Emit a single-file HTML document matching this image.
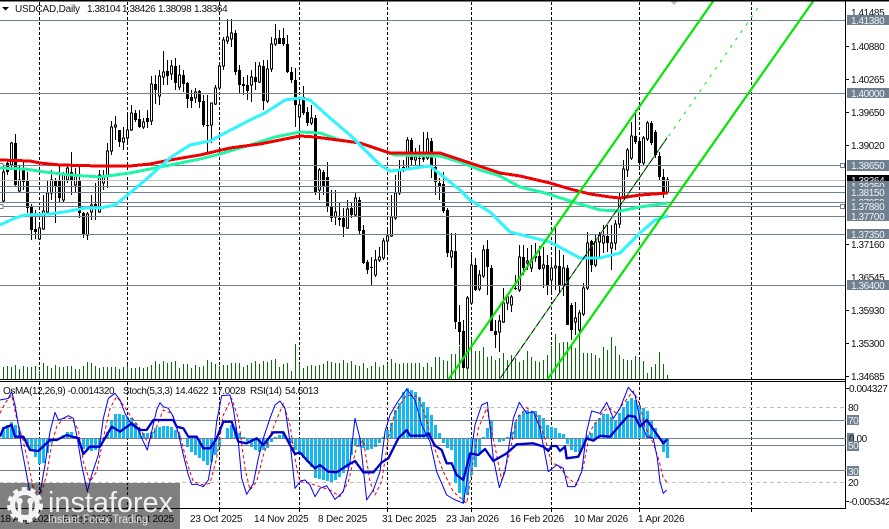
<!DOCTYPE html>
<html>
<head>
<meta charset="utf-8">
<title>USDCAD Daily</title>
<style>
html,body{margin:0;padding:0;background:#fff;width:889px;height:529px;overflow:hidden}
svg{display:block;position:absolute;left:0;top:0}
text{font-family:"Liberation Sans",sans-serif;font-size:10px;fill:#111}
.a{letter-spacing:-.42px}
.w{fill:#eef1f4;letter-spacing:-.42px}
.d{letter-spacing:-.2px}
</style>
</head>
<body>
<svg width="889" height="529" viewBox="0 0 889 529" xmlns="http://www.w3.org/2000/svg">
<rect width="889" height="529" fill="#fff"/>
<!-- vertical grid -->
<g stroke="#000" stroke-width="1" stroke-dasharray="3 2" shape-rendering="crispEdges">
<path d="M39.5 2V379M127.5 2V379M219.5 2V379M299.5 2V379M387.5 2V379M471.5 2V379M551.5 2V379M639.5 2V379M751.5 2V379"/>
<path d="M39.5 382V508M127.5 382V508M219.5 382V508M299.5 382V508M387.5 382V508M471.5 382V508M551.5 382V508M639.5 382V508M751.5 382V508"/>
</g>
<!-- volumes -->
<path stroke="#0b6b0b" stroke-width="1" shape-rendering="crispEdges" fill="none" d="M3.5 367V379M7.5 366V379M11.5 367V379M15.5 365V379M19.5 369V379M23.5 366V379M27.5 367V379M31.5 367V379M35.5 366V379M39.5 371V379M43.5 363V379M47.5 366V379M51.5 368V379M55.5 365V379M59.5 367V379M63.5 367V379M67.5 366V379M71.5 366V379M75.5 369V379M79.5 369V379M83.5 366V379M87.5 362V379M91.5 363V379M95.5 366V379M99.5 368V379M103.5 367V379M107.5 367V379M111.5 367V379M115.5 367V379M119.5 369V379M123.5 367V379M127.5 365V379M131.5 368V379M135.5 368V379M139.5 367V379M143.5 368V379M147.5 367V379M151.5 365V379M155.5 361V379M159.5 364V379M163.5 361V379M167.5 363V379M171.5 362V379M175.5 361V379M179.5 368V379M183.5 364V379M187.5 364V379M191.5 368V379M195.5 365V379M199.5 367V379M203.5 366V379M207.5 360V379M211.5 362V379M215.5 364V379M219.5 366V379M223.5 365V379M227.5 365V379M231.5 363V379M235.5 363V379M239.5 363V379M243.5 367V379M247.5 365V379M251.5 363V379M255.5 361V379M259.5 364V379M263.5 361V379M267.5 362V379M271.5 360V379M275.5 359V379M279.5 367V379M283.5 364V379M287.5 363V379M291.5 371V379M295.5 344V379M299.5 364V379M303.5 368V379M307.5 366V379M311.5 365V379M315.5 366V379M319.5 365V379M323.5 364V379M327.5 361V379M331.5 362V379M335.5 363V379M339.5 363V379M343.5 360V379M347.5 363V379M351.5 361V379M355.5 365V379M359.5 366V379M363.5 363V379M367.5 368V379M371.5 366V379M375.5 362V379M379.5 367V379M383.5 365V379M387.5 364V379M391.5 359V379M395.5 363V379M399.5 364V379M403.5 363V379M407.5 363V379M411.5 363V379M415.5 363V379M419.5 363V379M423.5 367V379M427.5 363V379M431.5 367V379M435.5 357V379M439.5 357V379M443.5 360V379M447.5 361V379M451.5 354V379M455.5 354V379M459.5 346V379M463.5 351V379M467.5 354V379M471.5 338V379M475.5 351V379M479.5 351V379M483.5 347V379M487.5 357V379M491.5 356V379M495.5 360V379M499.5 358V379M503.5 353V379M507.5 360V379M511.5 355V379M515.5 358V379M519.5 362V379M523.5 360V379M527.5 351V379M531.5 357V379M535.5 361V379M539.5 362V379M543.5 360V379M547.5 355V379M551.5 346V379M555.5 334V379M559.5 343V379M563.5 342V379M567.5 342V379M571.5 345V379M575.5 348V379M579.5 333V379M583.5 353V379M587.5 353V379M591.5 353V379M595.5 355V379M599.5 358V379M603.5 347V379M607.5 350V379M611.5 337V379M615.5 346V379M619.5 355V379M623.5 359V379M627.5 360V379M631.5 360V379M635.5 356V379M639.5 359V379M643.5 361V379M647.5 373V379M651.5 367V379M655.5 364V379M659.5 352V379M663.5 364V379M667.5 375V379"/>
<!-- candles: wicks -->
<path stroke="#000" stroke-width="1" fill="none" shape-rendering="crispEdges" d="M3.5 165V202M7.5 160V175M11.5 142V167M15.5 134V187M19.5 165V192M23.5 160V190M27.5 172V213M31.5 204V240M35.5 210V239M39.5 225V240M43.5 195V230M47.5 180V214M51.5 170V200M55.5 178V223M59.5 165V203M63.5 172V203M67.5 165V183M71.5 152V195M75.5 168V192M79.5 165V218M83.5 212V238M87.5 212V240M91.5 195V220M95.5 183V220M99.5 170V213M103.5 170V190M107.5 143V188M111.5 121V155M115.5 116V140M119.5 130V147M123.5 127V150M127.5 114V145M131.5 105V131M135.5 110V122M139.5 110V128M143.5 118V129M147.5 110V128M151.5 76V125M155.5 75V104M159.5 70V105M163.5 51V85M167.5 60V85M171.5 60V80M175.5 58V90M179.5 65V90M183.5 70V92M187.5 82V108M191.5 90V108M195.5 88V103M199.5 90V108M203.5 95V127M207.5 95V152M211.5 103V143M215.5 85V105M219.5 63V90M223.5 37V70M227.5 19V44M231.5 19V47M235.5 30V75M239.5 65V93M243.5 77V95M247.5 75V100M251.5 70V102M255.5 62V90M259.5 62V83M263.5 60V110M267.5 60V103M271.5 37V72M275.5 24V46M279.5 30V44M283.5 28V46M287.5 35V73M291.5 67V83M295.5 68V127M299.5 100V135M303.5 86V115M307.5 107V126M311.5 105V125M315.5 115V195M319.5 168V200M323.5 170V195M327.5 162V212M331.5 190V222M335.5 190V225M339.5 202V226M343.5 208V237M347.5 200V229M351.5 203V218M355.5 193V217M359.5 197V234M363.5 225V264M367.5 260V274M371.5 257V285M375.5 250V277M379.5 247V262M383.5 238V260M387.5 228V255M391.5 195V237M395.5 175V220M399.5 160V195M403.5 160V172M407.5 137V170M411.5 138V165M415.5 148V165M419.5 145V165M423.5 132V162M427.5 132V160M431.5 138V178M435.5 158V195M439.5 178V200M443.5 172V213M447.5 208V257M451.5 233V268M455.5 233V329M459.5 305V345M463.5 320V368M467.5 296V368M471.5 252V303M475.5 258V291M479.5 270V291M483.5 245V278M487.5 240V295M491.5 265V331M495.5 320V348M499.5 315V352M503.5 288V323M507.5 297V310M511.5 295V312M515.5 275V290M519.5 245V292M523.5 245V275M527.5 248V270M531.5 245V272M535.5 243V262M539.5 246V270M543.5 247V288M547.5 255V295M551.5 257V292M555.5 227V290M559.5 250V292M563.5 255V296M567.5 265V325M571.5 303V340M575.5 302V335M579.5 310V332M583.5 283V316M587.5 232V290M591.5 240V272M595.5 235V267M599.5 232V258M603.5 225V253M607.5 225V252M611.5 225V270M615.5 220V250M619.5 192V228M623.5 160V199M627.5 148V177M631.5 122V160M635.5 110V144M639.5 138V168M643.5 136V165M647.5 121V141M651.5 121V145M655.5 130V158M659.5 152V180M663.5 169V198M667.5 177V194"/>
<!-- candles: bear bodies -->
<path stroke="#000" stroke-width="3" fill="none" shape-rendering="crispEdges" d="M7.5 163V172M15.5 143V185M23.5 170V182M27.5 180V208M31.5 207V230M35.5 229V232M55.5 180V187M59.5 180V198M71.5 172V180M79.5 180V213M83.5 213V235M95.5 204V208M119.5 130V142M135.5 113V120M139.5 119V127M147.5 118V122M155.5 84V90M167.5 71V76M175.5 66V83M183.5 75V84M187.5 83V99M191.5 97V101M199.5 91V102M203.5 101V125M207.5 125V126M235.5 33V72M239.5 70V85M243.5 84V86M247.5 85V91M255.5 77V82M263.5 66V101M279.5 38V44M283.5 38V44M287.5 44V72M291.5 72V80M295.5 80V105M303.5 97V113M307.5 112V123M315.5 118V192M323.5 172V186M327.5 177V207M331.5 207V218M339.5 218V220M343.5 218V227M351.5 208V215M359.5 200V231M363.5 230V263M367.5 262V270M371.5 267V268M403.5 167V170M411.5 140V160M419.5 158V159M431.5 141V165M435.5 167V182M439.5 183V186M443.5 184V211M447.5 210V253M455.5 251V322M459.5 322V332M463.5 331V368M475.5 265V290M487.5 249V267M491.5 268V331M495.5 331V335M515.5 288V289M523.5 257V268M535.5 256V258M539.5 256V269M547.5 265V285M559.5 266V285M567.5 268V325M571.5 305V330M591.5 241V265M607.5 236V243M635.5 136V142M639.5 141V163M651.5 123V143M655.5 132V155M659.5 156V177M663.5 177V192"/>
<!-- candles: bull bodies -->
<path stroke="#000" stroke-width="1" fill="#fff" shape-rendering="crispEdges" d="M2.5 172h2v29h-2zM10.5 143h2v22h-2zM18.5 180h2v11h-2zM38.5 228h2v11h-2zM42.5 211h2v18h-2zM46.5 193h2v19h-2zM50.5 180h2v13h-2zM62.5 175h2v25h-2zM66.5 168h2v12h-2zM74.5 175h2v10h-2zM86.5 214h2v21h-2zM90.5 205h2v7h-2zM98.5 175h2v37h-2zM102.5 177h2v6h-2zM106.5 151h2v26h-2zM110.5 127h2v24h-2zM114.5 125h2v2h-2zM122.5 138h2v4h-2zM126.5 130h2v8h-2zM130.5 113h2v17h-2zM142.5 122h2v5h-2zM150.5 84h2v37h-2zM158.5 76h2v20h-2zM162.5 72h2v5h-2zM170.5 66h2v8h-2zM178.5 75h2v12h-2zM194.5 92h2v6h-2zM210.5 103h2v22h-2zM214.5 88h2v16h-2zM218.5 66h2v22h-2zM222.5 40h2v26h-2zM226.5 37h2v4h-2zM230.5 33h2v6h-2zM250.5 77h2v8h-2zM258.5 66h2v16h-2zM266.5 69h2v32h-2zM270.5 44h2v25h-2zM274.5 39h2v5h-2zM298.5 105h2v12h-2zM310.5 118h2v5h-2zM318.5 170h2v20h-2zM334.5 212h2v5h-2zM346.5 209h2v19h-2zM354.5 198h2v17h-2zM374.5 260h2v15h-2zM378.5 257h2v3h-2zM382.5 241h2v17h-2zM386.5 236h2v5h-2zM390.5 217h2v19h-2zM394.5 193h2v25h-2zM398.5 169h2v24h-2zM406.5 140h2v28h-2zM414.5 157h2v3h-2zM422.5 158h2v1h-2zM426.5 139h2v19h-2zM450.5 251h2v6h-2zM466.5 298h2v70h-2zM470.5 265h2v38h-2zM478.5 275h2v14h-2zM482.5 250h2v26h-2zM498.5 321h2v11h-2zM502.5 303h2v19h-2zM506.5 297h2v6h-2zM510.5 297h2v8h-2zM518.5 257h2v33h-2zM526.5 261h2v2h-2zM530.5 260h2v8h-2zM542.5 265h2v3h-2zM550.5 268h2v12h-2zM554.5 266h2v2h-2zM562.5 268h2v17h-2zM574.5 318h2v4h-2zM578.5 313h2v17h-2zM582.5 288h2v26h-2zM586.5 243h2v45h-2zM594.5 242h2v23h-2zM598.5 235h2v7h-2zM602.5 236h2v7h-2zM610.5 243h2v5h-2zM614.5 224h2v19h-2zM618.5 197h2v27h-2zM622.5 169h2v28h-2zM626.5 150h2v20h-2zM630.5 136h2v22h-2zM642.5 138h2v25h-2zM646.5 123h2v16h-2zM666.5 180h2v12h-2z"/>
<!-- horizontal levels main -->
<g stroke="#708090" stroke-width="1" shape-rendering="crispEdges">
<path d="M0 20.5H846M0 93.5H846M0 165.5H846M0 186.5H846M0 192.5H846M0 202.5H846M0 206.5H846M0 216.5H846M0 234.5H846M0 285.5H846"/>
<path stroke="#c0c0c0" d="M0 180.5H846"/>
</g>
<!-- small squares -->
<g fill="#fff" stroke="#708090" shape-rendering="crispEdges">
<rect x="-1" y="163.5" width="4" height="4"/><rect x="-1" y="204.5" width="4" height="4"/>
<rect x="840.5" y="163.5" width="4" height="4"/><rect x="840.5" y="204.5" width="4" height="4"/>
</g>
<path d="M669 0h10l-5 5z" fill="#bbb"/>
<!-- moving averages -->
<g fill="none" stroke-width="3" stroke-linejoin="round" shape-rendering="crispEdges">
<polyline stroke="#22f6a6" points="0,168 25,169 45,172 70,175 100,177 130,173 160,167 200,159 220,154 250,145 275,137 300,132 320,133 340,140 360,143 380,150 395,155 440,156 460,162 480,170 500,176 520,187 545,193 567,200 600,210 620,211 640,207 668,203"/>
<polyline stroke="#f00000" points="0,160 30,161 40,163 60,165 100,166 130,166 150,164 170,160 200,155 230,148 260,144 280,140 300,136 315,137 330,139 360,143 390,153 440,153 470,163 500,173 520,176 550,183 570,189 590,194 610,197 620,198 640,195 668,193"/>
<polyline stroke="#2ff5ff" points="0,225 15,218 25,215 50,214 70,211 85,208 100,208 115,205 130,193 150,176 170,158 190,145 210,141 225,133 250,120 265,113 285,100 300,98 310,100 330,118 350,135 365,150 380,165 390,171 400,170 415,168 430,166 445,178 460,190 470,200 490,212 510,232 530,237 550,242 565,250 580,258 600,258 620,253 640,233 655,220 668,216"/>
</g>
<!-- channel -->
<g fill="none">
<path stroke="#00e800" stroke-width="2.2" d="M448 380L714 0M547 380L814 0"/>
<path stroke="#000" stroke-width="1" d="M499 380L667 138"/>
<path stroke="#00e800" stroke-width="1" stroke-dasharray="3 6" d="M499 380L760 5"/>
</g>
<!-- frames -->
<g stroke="#000" shape-rendering="crispEdges" fill="none">
<path d="M0 .5H889" stroke-width="2"/>
<path d="M0 379.5H846M0 381.5H846M0 508.5H846"/>
<path d="M845.5 0V509"/>
<path d="M846 46.5h3M846 79.5h3M846 112.5h3M846 145.5h3M846 244.5h3M846 310.5h3M846 343.5h3M846 376.5h3M846 388.5h3M846 501.5h3"/>
<path d="M39.5 509v3M127.5 509v3M219.5 509v3M299.5 509v3M387.5 509v3M471.5 509v3M551.5 509v3M639.5 509v3M751.5 509v3"/>
</g>
<!-- sub-window levels -->
<g shape-rendering="crispEdges" stroke-width="1">
<path stroke="#c0c0c0" stroke-dasharray="4 3" d="M0 407.5H846M0 482.5H846"/>
</g>
<!-- OsMA histogram -->
<path stroke="#12b9f2" stroke-width="3" shape-rendering="crispEdges" fill="none" d="M3.5 427V438M7.5 425V438M11.5 422V438M15.5 425V438M19.5 430V438M23.5 437V438M27.5 438V447M31.5 438V450M35.5 438V457M39.5 438V464M43.5 438V463M47.5 438V453M51.5 438V443M55.5 438V440M63.5 435V438M67.5 432V438M71.5 432V438M75.5 436V438M83.5 438V449M87.5 438V450M91.5 438V451M95.5 438V450M99.5 438V447M103.5 438V440M107.5 432V438M111.5 420V438M115.5 414V438M119.5 414V438M123.5 415V438M127.5 417V438M131.5 418V438M135.5 423V438M139.5 428V438M143.5 433V438M147.5 433V438M151.5 432V438M155.5 428V438M159.5 427V438M163.5 426V438M167.5 426V438M171.5 427V438M175.5 430V438M179.5 435V438M183.5 438V439M187.5 438V447M191.5 438V452M195.5 438V455M199.5 438V458M203.5 438V461M207.5 438V465M211.5 438V462M215.5 438V455M219.5 438V447M227.5 428V438M231.5 425V438M235.5 427V438M239.5 433V438M243.5 437V438M247.5 438V443M251.5 438V447M255.5 438V450M259.5 438V452M263.5 438V450M267.5 438V448M271.5 438V442M275.5 437V438M279.5 435V438M283.5 432V438M287.5 438V440M291.5 438V443M295.5 438V450M299.5 438V452M303.5 438V458M307.5 438V462M311.5 438V467M315.5 438V478M319.5 438V479M323.5 438V480M327.5 438V481M331.5 438V482M335.5 438V480M339.5 438V477M343.5 438V473M347.5 438V468M351.5 438V455M355.5 438V445M359.5 438V447M363.5 438V448M367.5 438V450M371.5 438V449M375.5 438V447M379.5 438V443M383.5 437V438M387.5 430V438M391.5 423V438M395.5 410V438M399.5 403V438M403.5 392V438M407.5 388V438M411.5 390V438M415.5 392V438M419.5 397V438M423.5 402V438M427.5 407V438M431.5 415V438M435.5 425V438M439.5 433V438M443.5 438V443M447.5 438V448M451.5 438V450M455.5 438V483M459.5 438V493M463.5 438V503M467.5 438V495M471.5 438V475M475.5 438V467M479.5 438V453M483.5 437V438M487.5 428V438M491.5 420V438M495.5 438V439M499.5 438V442M503.5 438V441M507.5 437V438M511.5 432V438M515.5 422V438M519.5 415V438M523.5 412V438M527.5 410V438M531.5 412V438M535.5 411V438M539.5 415V438M543.5 418V438M547.5 425V438M551.5 427V438M555.5 428V438M559.5 433V438M563.5 434V438M567.5 438V444M571.5 438V450M575.5 438V452M579.5 438V452M583.5 438V447M587.5 435V438M591.5 433V438M595.5 423V438M599.5 418V438M603.5 414V438M607.5 414V438M611.5 417V438M615.5 420V438M619.5 413V438M623.5 407V438M627.5 401V438M631.5 398V438M635.5 400V438M639.5 405V438M643.5 408V438M647.5 411V438M651.5 420V438M655.5 428V438M659.5 438V439M663.5 438V452M667.5 438V458"/>
<g stroke="#708090" stroke-width="1" shape-rendering="crispEdges">
<path d="M0 420.5H846M0 438.5H846M0 445.5H846M0 470.5H846"/>
</g>
<!-- Stochastic + RSI -->
<g fill="none" stroke-linejoin="round">
<g transform="translate(0 375) scale(.33333)">
<polyline stroke="#f00000" stroke-width="3" stroke-dasharray="10 8" points="0,115 15,85 35,60 50,130 70,200 85,265 100,340 120,365 140,300 155,210 170,155 190,130 215,130 235,165 250,260 270,320 290,290 310,190 330,100 350,65 370,90 390,120 420,160 445,205 470,155 490,105 515,115 540,180 560,260 580,320 610,330 630,325 650,250 670,120 695,70 715,130 735,280 750,345 770,320 790,240 815,170 850,85 870,150 890,280 900,320"/>
<polyline stroke="#0000ff" stroke-width="3" points="0,75 25,70 35,50 45,90 55,150 65,220 80,300 90,355 105,375 120,355 135,270 150,170 165,112 175,135 190,130 205,122 220,130 232,190 245,270 262,350 275,300 295,240 310,130 325,70 345,55 360,75 375,115 395,150 415,165 430,200 442,225 455,170 470,105 480,83 490,95 505,100 520,125 535,175 550,240 565,300 575,328 590,328 610,335 625,315 640,230 650,140 665,62 690,60 700,100 715,200 725,310 740,358 760,325 775,250 790,190 810,130 825,90 840,78 855,100 870,200 885,340 900,320"/>
<polyline stroke="#0000cd" stroke-width="7" points="0,185 10,160 35,150 45,185 70,185 90,225 115,228 150,195 170,195 200,180 235,190 250,237 270,215 300,215 335,155 360,170 395,145 420,165 440,165 460,135 520,135 530,155 550,160 565,185 590,185 610,220 630,220 650,190 670,140 695,140 715,200 740,205 770,190 790,210 820,172 850,172 870,210 885,237 900,232"/>
</g>
<g transform="translate(300 375) scale(.33333)">
<polyline stroke="#f00000" stroke-width="3" stroke-dasharray="10 8" points="0,320 30,325 60,335 90,345 120,365 145,320 170,215 190,195 210,320 225,360 245,320 265,190 285,110 320,60 355,65 375,120 400,210 430,290 460,350 500,385 515,290 535,160 560,100 580,190 605,315 630,230 650,130 680,98 710,120 735,190 755,265 775,270 800,305 830,330 850,275 870,170 885,145 900,130"/>
<polyline stroke="#0000ff" stroke-width="3" points="0,318 15,315 30,330 45,365 60,340 80,332 105,373 130,350 150,260 165,130 180,190 200,375 220,345 240,290 255,170 270,120 290,85 320,42 345,75 365,150 390,200 410,290 440,360 460,372 490,385 510,260 525,150 545,90 562,82 580,250 598,338 615,290 640,130 658,82 680,115 700,110 720,160 745,290 770,270 790,280 803,335 825,335 845,290 860,170 875,108 900,115"/>
<polyline stroke="#0000cd" stroke-width="7" points="0,232 20,255 45,280 60,270 85,290 110,292 140,272 165,258 190,292 220,292 245,262 265,250 295,190 320,165 330,182 375,182 385,175 405,212 425,225 440,265 455,265 470,300 490,315 510,235 535,240 555,222 580,258 620,235 650,208 700,205 730,215 745,228 755,213 770,213 780,228 795,215 800,250 835,245 860,190 880,197 900,182"/>
</g>
<g transform="translate(600 375) scale(.33333)">
<polyline stroke="#f00000" stroke-width="3" stroke-dasharray="10 8" points="0,120 25,97 50,115 70,85 100,48 120,90 135,155 160,205 178,260 190,310 202,322"/>
<polyline stroke="#0000ff" stroke-width="3" points="0,115 20,82 40,130 60,100 85,37 105,60 120,135 140,185 160,190 172,250 180,320 190,355 200,345"/>
<polyline stroke="#0000cd" stroke-width="7" points="0,182 30,185 60,150 85,122 105,125 120,155 140,135 165,170 190,205 202,193"/>
</g>
</g>
<!-- title -->
<path d="M2 7h7l-3.5 3.5z" fill="#000"/>
<text x="15" y="12" class="d" fill="#222">USDCAD,Daily</text>
<text x="87" y="12" class="a">1.38104</text>
<text x="122" y="12" class="a">1.38426</text>
<text x="158" y="12" class="a">1.38098</text>
<text x="194" y="12" class="a">1.38364</text>
<text x="3" y="394" class="a">OsMA(12,26,9) -0.0014320</text>
<text x="123" y="394" class="a">Stoch(5,3,3)</text>
<text x="175" y="394" class="a">14.4622</text>
<text x="212" y="394" class="a">17.0028</text>
<text x="250" y="394" class="a">RSI(14)</text>
<text x="285" y="394" class="a">54.6013</text>
<!-- right axis -->
<text x="851" y="16" class="a">1.41485</text>
<text x="851" y="50" class="a">1.40880</text>
<text x="851" y="83" class="a">1.40265</text>
<text x="851" y="116" class="a">1.39650</text>
<text x="851" y="149" class="a">1.39020</text>
<text x="851" y="248" class="a">1.37160</text>
<text x="851" y="281" class="a">1.36545</text>
<text x="851" y="314" class="a">1.35930</text>
<text x="851" y="347" class="a">1.35300</text>
<text x="851" y="380" class="a">1.34685</text>
<g fill="#708090" shape-rendering="crispEdges"><rect x="847" y="15" width="42" height="10"/><rect x="847" y="88" width="42" height="10"/><rect x="847" y="160" width="42" height="11"/></g>
<text x="851" y="24" class="w">1.41380</text>
<text x="851" y="97" class="w">1.40000</text>
<text x="851" y="169" class="w">1.38650</text>
<rect x="847" y="175" width="42" height="10" fill="#000"/>
<text x="851" y="184" class="w">1.38364</text>
<rect x="847" y="181" width="42" height="10" fill="#708090"/>
<text x="851" y="190" class="w">1.38250</text>
<rect x="847" y="187" width="42" height="10" fill="#708090"/>
<text x="851" y="196" class="w">1.38150</text>
<rect x="847" y="197" width="42" height="10" fill="#708090"/>
<text x="851" y="206" class="w">1.37950</text>
<rect x="847" y="201" width="42" height="10" fill="#708090"/>
<text x="851" y="210" class="w">1.37880</text>
<rect x="847" y="211" width="42" height="10" fill="#708090"/>
<text x="851" y="220" class="w">1.37700</text>
<rect x="847" y="229" width="42" height="10" fill="#708090"/>
<text x="851" y="238" class="w">1.37350</text>
<rect x="847" y="280" width="42" height="10" fill="#708090"/>
<text x="851" y="289" class="w">1.36400</text>
<!-- sub axis -->
<text x="849" y="392" class="a">0.004327</text>
<text x="848" y="411" class="a">80</text>
<rect x="847" y="415" width="12" height="10" fill="#708090"/>
<text x="848" y="424" class="w">70</text>
<rect x="847" y="433" width="7" height="10" fill="#708090"/>
<text x="849" y="442" class="a">0.00</text>
<rect x="847" y="441" width="12" height="10" fill="#708090"/>
<text x="848" y="449" class="w">50</text>
<rect x="847" y="466" width="12" height="10" fill="#708090"/>
<text x="848" y="475" class="w">30</text>
<text x="848" y="486" class="a">20</text>
<text x="849" y="505" class="a">-0.005342</text>
<!-- time axis -->
<text x="0" y="522" class="d">18 Aug 2025</text>
<text x="63" y="522" class="d">8 Sep 2025</text>
<text x="127" y="522" class="d">1 Oct 2025</text>
<text x="190" y="522" class="d">23 Oct 2025</text>
<text x="254" y="522" class="d">14 Nov 2025</text>
<text x="318" y="522" class="d">8 Dec 2025</text>
<text x="382" y="522" class="d">31 Dec 2025</text>
<text x="446" y="522" class="d">23 Jan 2026</text>
<text x="510" y="522" class="d">16 Feb 2026</text>
<text x="574" y="522" class="d">10 Mar 2026</text>
<text x="638" y="522" class="d">1 Apr 2026</text>
<!-- watermark -->
<rect x="0" y="483" width="180" height="46" fill="#000" opacity=".5"/>
<g fill="none" stroke="#f4f4f4">
<circle cx="25" cy="505" r="12.5" stroke-width="5"/>
<circle cx="25" cy="505" r="16" stroke-width="4" stroke-dasharray="5 4"/>
<path stroke-width="3.5" d="M19.5 501V520M30.5 501V520"/>
</g>
<circle cx="19.5" cy="501" r="3.2" fill="#f4f4f4"/><circle cx="30.5" cy="501" r="3.2" fill="#f4f4f4"/>
<text x="48" y="512" textLength="125" lengthAdjust="spacingAndGlyphs" style="font-size:29px;fill:#f0f0f0;letter-spacing:0">instaforex</text>
<text x="48" y="523" textLength="100" lengthAdjust="spacingAndGlyphs" style="font-size:12px;fill:#e4e4e4;letter-spacing:0">Instant Forex Trading</text>
</svg>
</body>
</html>
